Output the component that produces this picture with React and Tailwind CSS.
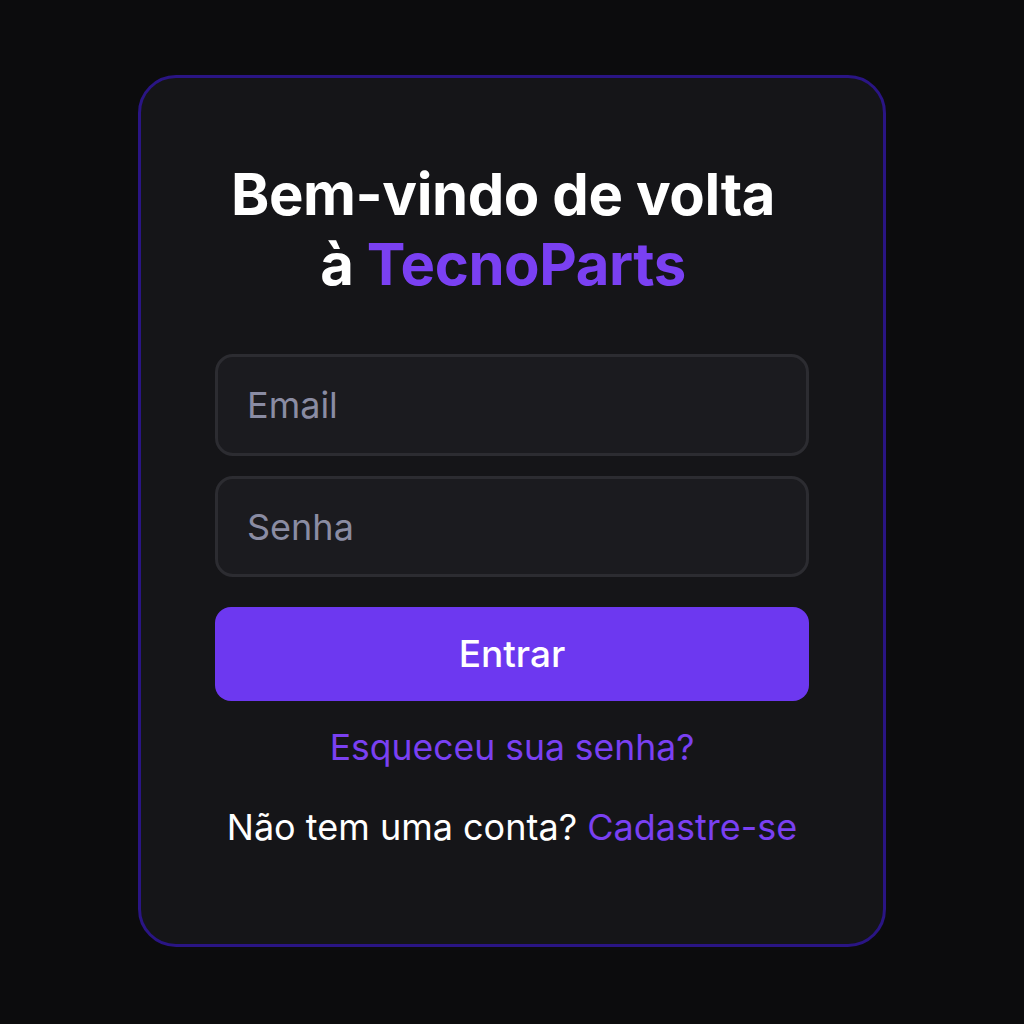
export default function App() {
  return (
    <div
      className="min-h-screen w-full bg-[#0c0c0d] flex items-start justify-center pt-[75px]"
      style={{ fontFamily: "Inter, 'Noto Sans', sans-serif" }}
    >
      <div className="w-[748px] h-[872px] rounded-[38px] border-[3px] border-[#2a1584] bg-[#151518] flex flex-col items-center px-[74px] pt-[81px]">
        <h1 className="text-center text-[58px] font-bold leading-[70px] text-white tracking-[-0.4px] pr-[18px]">
          Bem-vindo de volta
          <br />
          à <span className="text-[#7a40f2]">TecnoParts</span>
        </h1>

        <div className="mt-[55px] w-full flex flex-col gap-[20px]">
          <div className="h-[102px] rounded-[18px] border-[3px] border-[#2c2c31] bg-[#1b1b1f] flex items-center px-[29px]">
            <span className="text-[36px] text-[#8a8ca3]">Email</span>
          </div>
          <div className="h-[101px] rounded-[18px] border-[3px] border-[#2c2c31] bg-[#1b1b1f] flex items-center px-[29px]">
            <span className="text-[36px] text-[#8a8ca3]">Senha</span>
          </div>
          <button className="mt-[10px] h-[94px] rounded-[16px] bg-[#6d38f0] text-white text-[37px] font-medium">
            Entrar
          </button>
        </div>

        <p className="mt-[20px] text-[35.5px] text-[#7a40f2]">Esqueceu sua senha?</p>
        <p className="mt-[26px] text-[36px] text-white">
          Não tem uma conta? <span className="text-[#7a40f2]">Cadastre-se</span>
        </p>
      </div>
    </div>
  );
}
